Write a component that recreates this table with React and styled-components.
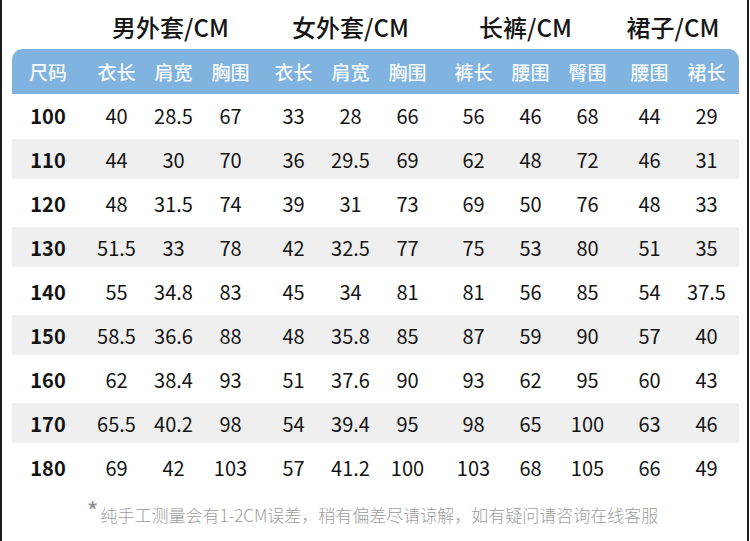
import React from 'react';
import styled, { createGlobalStyle } from 'styled-components';

const GlobalStyle = createGlobalStyle`
  html, body {
    margin: 0;
    padding: 0;
    background: #fff;
  }
  body {
    font-family: "Noto Sans CJK SC", "Noto Sans", sans-serif;
  }
`;

const Frame = styled.div`
  box-sizing: border-box;
  width: 749px;
  height: 541px;
  border-left: 2px solid #1c1c1c;
  border-right: 2px solid #1c1c1c;
  padding: 0 8px 0 10px;
  overflow: hidden;
`;

const TitleRow = styled.div`
  display: flex;
  height: 49px;
  padding-top: 4px;
  box-sizing: border-box;
`;

const SizeSpacer = styled.div`
  width: 76px;
  flex: none;
`;

const Group = styled.div`
  display: flex;
  flex: none;
  margin-left: ${(p) => p.$gap}px;
`;

const GroupTitle = styled.div`
  width: ${(p) => p.$span * 57}px;
  padding-right: ${(p) => p.$shift}px;
  box-sizing: border-box;
  text-align: center;
  font-size: 24px;
  line-height: 45px;
  font-weight: 500;
  color: #161616;
  white-space: nowrap;
`;

const HeadBar = styled.div`
  display: flex;
  height: 45px;
  background: #80b3df;
  border-radius: 11px 11px 0 0;
`;

const HeadCell = styled.div`
  width: ${(p) => (p.$size ? 76 : 57)}px;
  padding-right: ${(p) => (p.$size ? 4 : 0)}px;
  box-sizing: border-box;
  flex: none;
  text-align: center;
  font-size: 19px;
  line-height: 45px;
  font-weight: 500;
  color: #f7fafd;
`;

const Body = styled.div`
  display: flex;
  flex-direction: column;
  gap: 4px;
  padding-top: 1px;
`;

const Row = styled.div`
  display: flex;
  height: 40px;
  background: ${(p) => (p.$shade ? '#efefef' : 'transparent')};
`;

const Cell = styled.div`
  width: ${(p) => (p.$size ? 76 : 57)}px;
  padding-right: ${(p) => (p.$size ? 4 : 0)}px;
  box-sizing: border-box;
  flex: none;
  text-align: center;
  font-size: 20px;
  line-height: 41px;
  font-weight: ${(p) => (p.$size ? 700 : 400)};
  color: #141414;
  white-space: nowrap;
`;

const Note = styled.div`
  padding-top: 16px;
  padding-right: 6px;
  text-align: center;
  font-size: 17px;
  line-height: 24px;
  font-weight: 300;
  color: #9d9d9d;
  white-space: nowrap;
`;

const Star = styled.span`
  font-size: 25px;
  font-weight: 400;
  line-height: 0;
  vertical-align: 1px;
  margin-right: 2px;
  color: #8c8c8c;
`;

const groups = [
  { title: '男外套/CM', cols: ['衣长', '肩宽', '胸围'], gap: 0, shift: 6 },
  { title: '女外套/CM', cols: ['衣长', '肩宽', '胸围'], gap: 6, shift: -2 },
  { title: '长裤/CM', cols: ['裤长', '腰围', '臀围'], gap: 9, shift: 10 },
  { title: '裙子/CM', cols: ['腰围', '裙长'], gap: 5, shift: 10 },
];

const rows = [
  ['100', [40, 28.5, 67], [33, 28, 66], [56, 46, 68], [44, 29]],
  ['110', [44, 30, 70], [36, 29.5, 69], [62, 48, 72], [46, 31]],
  ['120', [48, 31.5, 74], [39, 31, 73], [69, 50, 76], [48, 33]],
  ['130', [51.5, 33, 78], [42, 32.5, 77], [75, 53, 80], [51, 35]],
  ['140', [55, 34.8, 83], [45, 34, 81], [81, 56, 85], [54, 37.5]],
  ['150', [58.5, 36.6, 88], [48, 35.8, 85], [87, 59, 90], [57, 40]],
  ['160', [62, 38.4, 93], [51, 37.6, 90], [93, 62, 95], [60, 43]],
  ['170', [65.5, 40.2, 98], [54, 39.4, 95], [98, 65, 100], [63, 46]],
  ['180', [69, 42, 103], [57, 41.2, 100], [103, 68, 105], [66, 49]],
];

const App = () => (
  <>
    <GlobalStyle />
    <Frame>
      <TitleRow>
        <SizeSpacer />
        {groups.map((g) => (
          <Group key={g.title} $gap={g.gap}>
            <GroupTitle $span={g.cols.length} $shift={g.shift}>
              {g.title}
            </GroupTitle>
          </Group>
        ))}
      </TitleRow>

      <HeadBar>
        <HeadCell $size>尺码</HeadCell>
        {groups.map((g) => (
          <Group key={g.title} $gap={g.gap}>
            {g.cols.map((c, i) => (
              <HeadCell key={i}>{c}</HeadCell>
            ))}
          </Group>
        ))}
      </HeadBar>

      <Body>
        {rows.map(([size, ...vals], r) => (
          <Row key={size} $shade={r % 2 === 1}>
            <Cell $size>{size}</Cell>
            {vals.map((v, gi) => (
              <Group key={gi} $gap={groups[gi].gap}>
                {v.map((n, i) => (
                  <Cell key={i}>{n}</Cell>
                ))}
              </Group>
            ))}
          </Row>
        ))}
      </Body>

      <Note>
        <Star>*</Star>纯手工测量会有1-2CM误差，稍有偏差尽请谅解，如有疑问请咨询在线客服
      </Note>
    </Frame>
  </>
);

export default App;
